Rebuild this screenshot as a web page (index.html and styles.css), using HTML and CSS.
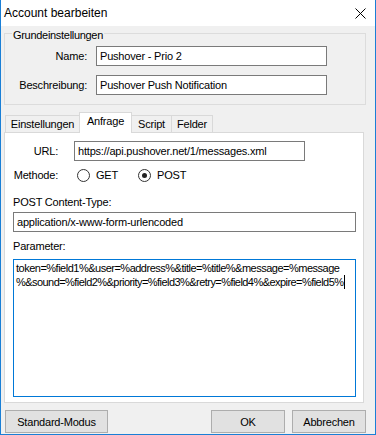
FILE: index.html
```html
<!DOCTYPE html>
<html lang="de">
<head>
<meta charset="utf-8">
<title>Account bearbeiten</title>
<link rel="stylesheet" href="styles.css">
</head>
<body>
<div class="window">
  <div class="titlebar">
    <span class="title">Account bearbeiten</span>
    <svg class="close" width="11" height="11" viewBox="0 0 11 11"><path d="M0.5 0.5L10.5 10.5M10.5 0.5L0.5 10.5" stroke="#000" stroke-width="1" fill="none"/></svg>
  </div>
  <div class="body">
    <fieldset class="group">
      <legend>Grundeinstellungen</legend>
      <div class="form-grid">
        <label>Name:</label>
        <div class="input">Pushover - Prio 2</div>
        <label>Beschreibung:</label>
        <div class="input">Pushover Push Notification</div>
      </div>
    </fieldset>

    <div class="tabs">
      <div class="tab tab-einst">Einstellungen</div>
      <div class="tab tab-anfrage active">Anfrage</div>
      <div class="tab tab-script">Script</div>
      <div class="tab tab-felder">Felder</div>
    </div>

    <div class="panel">
      <div class="req-grid">
        <label>URL:</label>
        <div class="input">https://api.pushover.net/1/messages.xml</div>
        <label>Methode:</label>
        <div class="radios">
          <span class="radio"><span class="radio-dot"></span>GET</span>
          <span class="radio"><span class="radio-dot checked"></span>POST</span>
        </div>
      </div>
      <div class="field-label ct-label">POST Content-Type:</div>
      <div class="input wide">application/x-www-form-urlencoded</div>
      <div class="field-label param-label">Parameter:</div>
      <div class="textarea">
        <div class="line l1">token=%field1%&amp;user=%address%&amp;title=%title%&amp;message=%message</div>
        <div class="line l2">%&amp;sound=%field2%&amp;priority=%field3%&amp;retry=%field4%&amp;expire=%field5%<span class="caret"></span></div>
      </div>
    </div>

    <div class="buttons">
      <button class="btn btn-standard">Standard-Modus</button>
      <div class="btn-group">
        <button class="btn btn-ok">OK</button>
        <button class="btn btn-cancel">Abbrechen</button>
      </div>
    </div>
  </div>
</div>
</body>
</html>
```
FILE: styles.css
```css
* { box-sizing: border-box; }
html, body { margin: 0; padding: 0; }
body {
  font-family: "Liberation Sans", Arial, sans-serif;
  font-size: 11px;
  color: #000;
  background: #fff;
}
.window {
  width: 376px;
  height: 435px;
  border: 1px solid #1a7fd6;
  border-top: none;
  background: #f0f0f0;
  display: flex;
  flex-direction: column;
}
.titlebar {
  height: 26px;
  flex: none;
  background: #fff;
  display: flex;
  align-items: center;
  justify-content: space-between;
  padding: 0 9px 0 3px;
}
.title { font-size: 12px; }
.close { display: block; margin-top: 1px; }

.body {
  flex: 1;
  display: flex;
  flex-direction: column;
  padding: 0 9px 0 3px;
  letter-spacing: -0.2px;
}

.group {
  margin: -1px 0 0;
  padding: 4px 0 9px;
  border: 1px solid #dcdcdc;
  min-width: 0;
}
.group legend {
  margin-left: 7px;
  padding: 3px 1px 0;
  line-height: 14px;
  letter-spacing: -0.3px;
}
.form-grid {
  display: grid;
  grid-template-columns: 82px 231px;
  grid-auto-rows: 20px;
  column-gap: 9px;
  row-gap: 9px;
  align-items: center;
}
.form-grid label, .req-grid label { text-align: right; }

.input {
  height: 20px;
  border: 1px solid #7a7a7a;
  background: #fff;
  padding: 0 3px;
  line-height: 18px;
  white-space: nowrap;
  overflow: hidden;
}

.tabs {
  display: flex;
  align-items: flex-end;
  height: 20px;
  margin-top: 7px;
  padding-left: 1px;
  position: relative;
  z-index: 1;
}
.tab {
  height: 17px;
  border: 1px solid #d9d9d9;
  border-bottom: none;
  background: #f0f0f0;
  text-align: center;
  line-height: 16px;
  margin-left: -1px;
}
.tab-einst { width: 75px; margin-left: 0; }
.tab-anfrage { width: 53px; }
.tab-script { width: 41px; }
.tab-felder { width: 42px; }
.tab.active {
  height: 21px;
  margin-bottom: -1px;
  background: #fff;
  line-height: 17px;
  position: relative;
  z-index: 2;
}

.panel {
  width: 360px;
  height: 271px;
  flex: none;
  border: 1px solid #d9d9d9;
  background: #fff;
  padding: 8px 7px 5px 8px;
  display: flex;
  flex-direction: column;
}
.req-grid {
  display: grid;
  grid-template-columns: 45px 231px;
  grid-auto-rows: 20px;
  column-gap: 16px;
  row-gap: 4px;
  align-items: center;
}
.radios {
  display: flex;
  align-items: center;
  gap: 20px;
  padding-left: 3px;
}
.radio {
  display: inline-flex;
  align-items: center;
  gap: 6px;
}
.radio-dot {
  width: 13px;
  height: 13px;
  border: 1px solid #333;
  border-radius: 50%;
  background: #fff;
  display: flex;
  align-items: center;
  justify-content: center;
}
.radio-dot.checked::after {
  content: "";
  width: 5px;
  height: 5px;
  border-radius: 50%;
  background: #222;
}
.field-label { line-height: 14px; }
.ct-label { margin-top: 10px; }
.input.wide { margin-top: 3px; }
.param-label { margin-top: 7px; }
.textarea {
  margin-top: 6px;
  height: 138px;
  border: 1px solid #0078d7;
  background: #fff;
  padding: 1px 2px;
  line-height: 14px;
  white-space: nowrap;
  overflow: hidden;
}
.line.l1 { letter-spacing: -0.5px; }
.line.l2 { letter-spacing: -0.55px; }
.caret {
  display: inline-block;
  width: 1px;
  height: 14px;
  background: #000;
  vertical-align: -3px;
  margin-left: 1px;
}

.buttons {
  margin-top: 7px;
  display: flex;
  justify-content: space-between;
}
.btn-group { display: flex; gap: 7px; }
.btn {
  height: 23px;
  border: 1px solid #adadad;
  background: #e1e1e1;
  font-family: "Liberation Sans", Arial, sans-serif;
  font-size: 11px;
  letter-spacing: -0.2px;
  color: #000;
  padding: 0;
  margin: 0;
}
.btn-standard { width: 103px; margin-left: 1px; }
.btn-ok, .btn-cancel { width: 74px; }
```
